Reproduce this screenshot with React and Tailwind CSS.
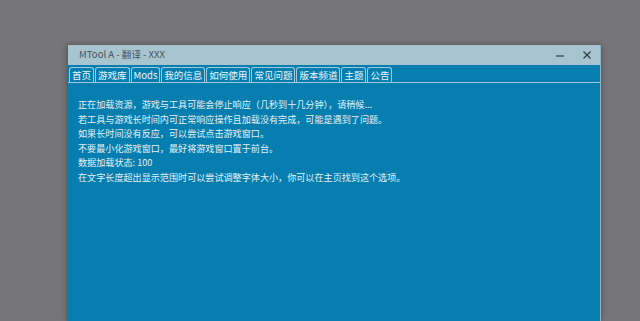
import React from 'react';

const tabs = ['首页', '游戏库', 'Mods', '我的信息', '如何使用', '常见问题', '版本频道', '主题', '公告'];

const lines = [
    '正在加载资源，游戏与工具可能会停止响应（几秒到十几分钟），请稍候...',
    '若工具与游戏长时间内可正常响应操作且加载没有完成，可能是遇到了问题。',
    '如果长时间没有反应，可以尝试点击游戏窗口。',
    '不要最小化游戏窗口，最好将游戏窗口置于前台。',
    '数据加载状态: 100',
    '在文字长度超出显示范围时可以尝试调整字体大小，你可以在主页找到这个选项。',
];

const font = { fontFamily: '"Noto Sans CJK SC", "Noto Sans", sans-serif' };

const App = () => {
    return (
        <div className="w-[640px] h-[321px] bg-[#767579] overflow-hidden pt-[45px] pl-[67px]" style={font}>
            <div className="w-[534px] h-full flex flex-col border-l border-[#5f5e62] border-r border-r-[#8fb3c6] shadow-[0_0_6px_rgba(0,0,0,0.35)]">
                {/* title bar */}
                <div className="h-[20px] bg-[#a9c4d1] flex items-center pl-[11px] pr-[8px]">
                    <span className="text-[9.6px] leading-none text-[#45535b]">MTool A - 翻译 - XXX</span>
                    <div className="ml-auto flex items-center gap-[17px]">
                        <svg width="10" height="10" viewBox="0 0 10 10">
                            <line x1="1" y1="6" x2="9" y2="6" stroke="#2f3a40" strokeWidth="1.2" />
                        </svg>
                        <svg width="10" height="10" viewBox="0 0 10 10">
                            <path d="M1.5 1.5 L8.5 8.5 M8.5 1.5 L1.5 8.5" stroke="#2f3a40" strokeWidth="1.2" />
                        </svg>
                    </div>
                </div>

                {/* tab strip */}
                <div className="h-[18px] bg-[#067fb0] flex items-end gap-px pl-px border-b border-[#9cc6da]">
                    {tabs.map((t) => (
                        <div
                            key={t}
                            className="h-[15px] px-[2px] border border-b-0 border-[#9fc9dd] rounded-t-[3px] text-[9.5px] leading-[14px] text-[#eef6fa]"
                        >
                            {t}
                        </div>
                    ))}
                </div>

                {/* body */}
                <div className="flex-1 bg-[#067fb0] pl-[10px] pt-[14px]">
                    {lines.map((l) => (
                        <div key={l} className="text-[9.1px] leading-[14.5px] text-[#e4f0f6] whitespace-nowrap">
                            {l}
                        </div>
                    ))}
                </div>
            </div>
        </div>
    );
};

export default App;
